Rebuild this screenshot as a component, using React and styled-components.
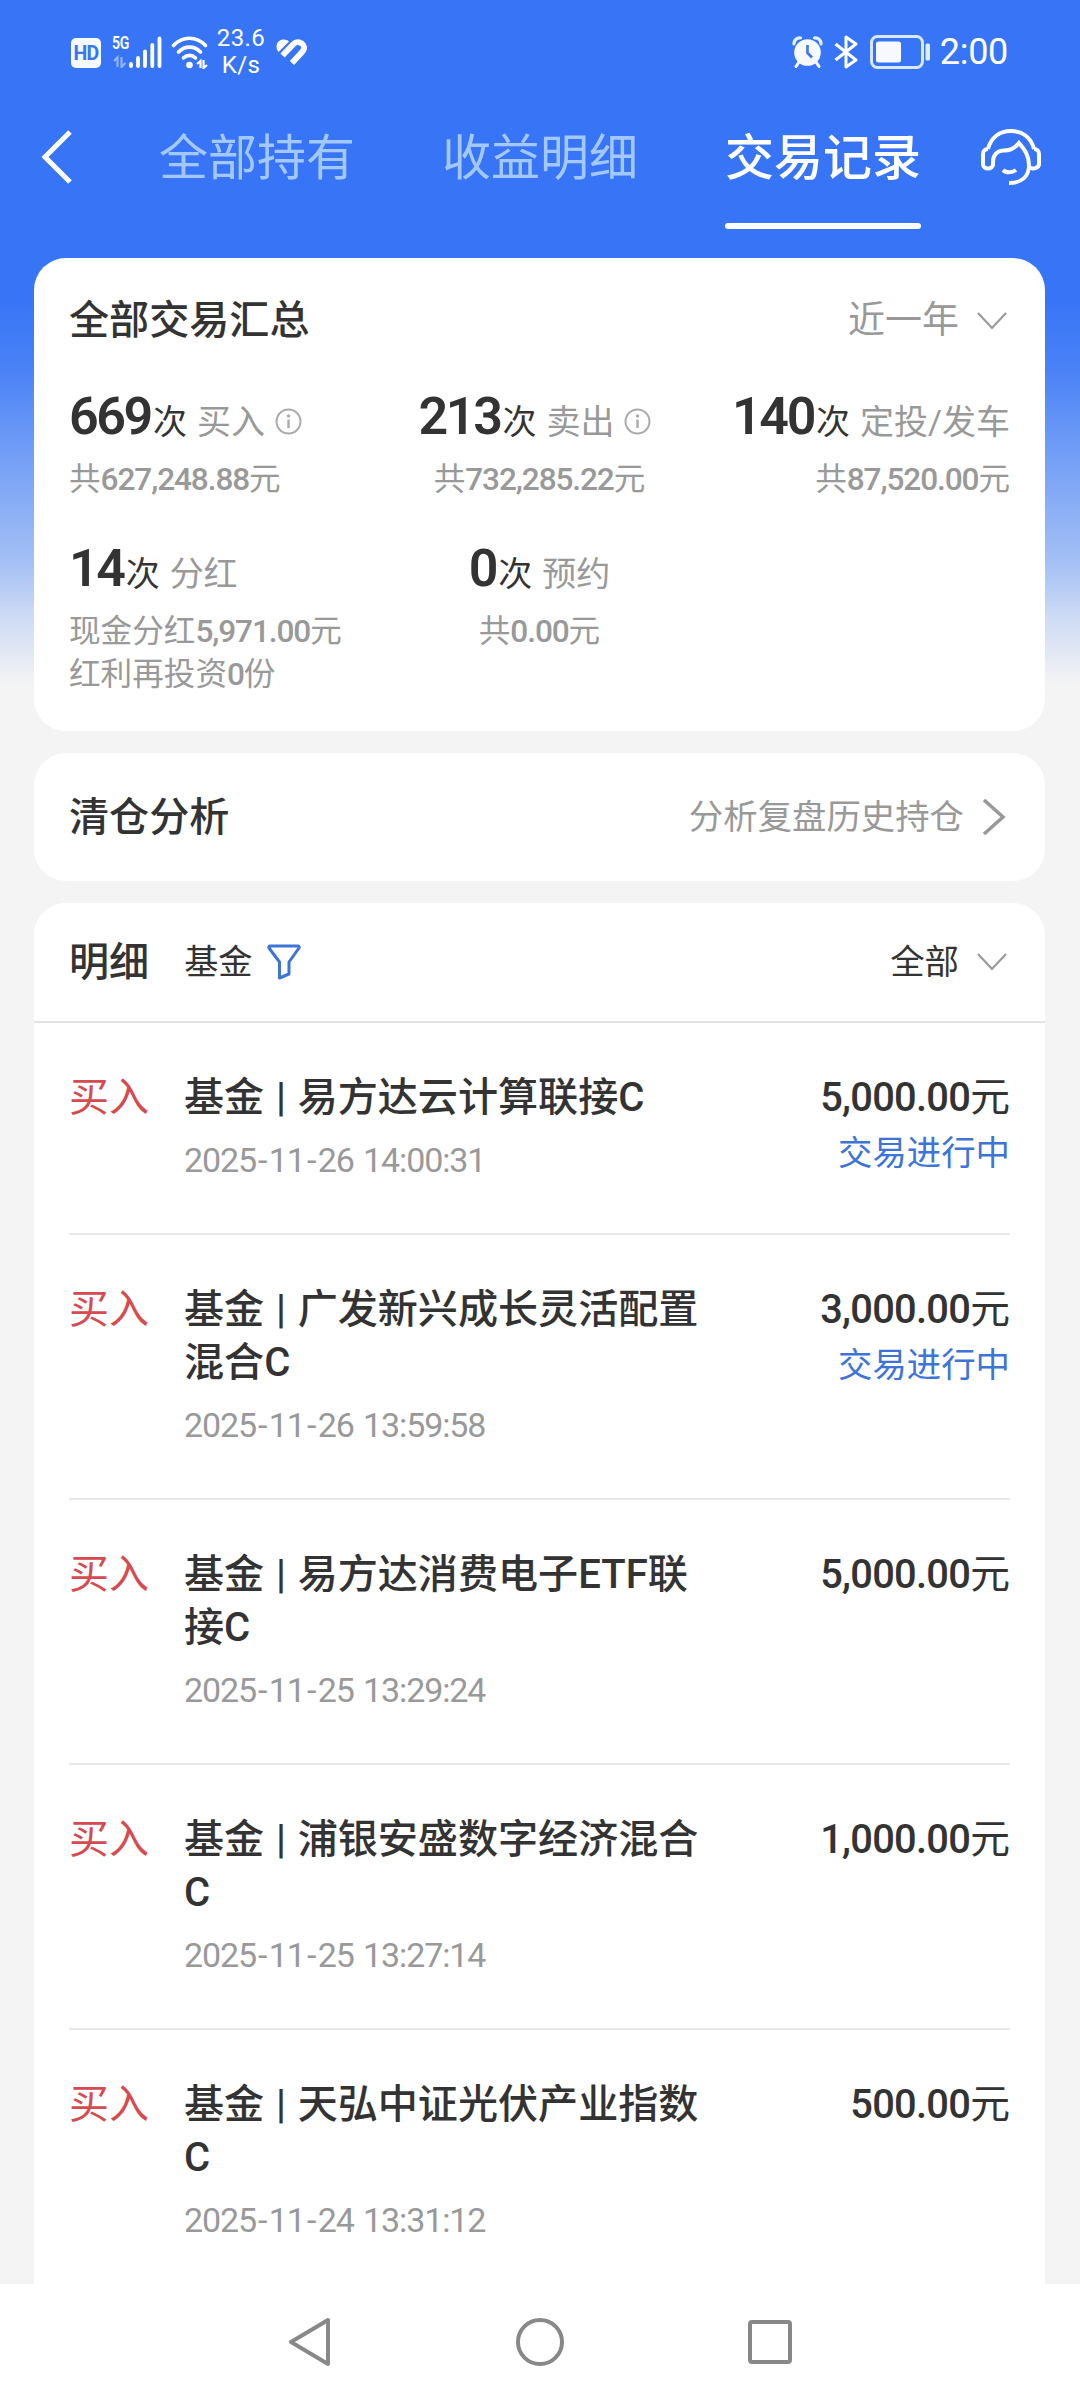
import React from 'react';
import styled, { createGlobalStyle } from 'styled-components';

const GlobalStyle = createGlobalStyle`
  * {
    box-sizing: border-box;
  }

  body {
    margin: 0;
    background: #f4f4f4;
    font-family: Roboto, 'Noto Sans CJK SC', sans-serif;
    color: #333;
  }
`;

const Page = styled.div`
  display: flex;
  flex-direction: column;
  width: 1080px;
  height: 2400px;
  overflow: hidden;
  background: linear-gradient(
      #3875f6 0,
      #3875f6 300px,
      #4a82f6 370px,
      #75a0f6 460px,
      #a3bff5 560px,
      #cfdcf4 620px,
      #f4f4f4 685px
    )
    no-repeat;
`;

const StatusBar = styled.div`
  display: flex;
  justify-content: space-between;
  align-items: center;
  height: 104px;
  padding: 0 72px 0 71px;
  color: #fff;
`;

const StatusGroup = styled.div`
  display: flex;
  align-items: center;
`;

const StatusIcon = styled.svg`
  display: block;
  flex: none;
  margin-left: ${({ $gap }) => $gap || 0}px;
`;

const HdBadge = styled.div`
  width: 30px;
  height: 30px;
  margin-top: 2px;
  border-radius: 5px;
  background: #f4faff;
  color: #3875f6;
  font-size: 19.5px;
  font-weight: 700;
  line-height: 31px;
  letter-spacing: -0.8px;
  text-align: center;
`;

const Signal = styled.div`
  position: relative;
  width: 50px;
  height: 32px;
  margin-left: 11px;
`;

const SignalLabel = styled.span`
  position: absolute;
  top: 0;
  left: 0;
  font-size: 19px;
  font-weight: 600;
  line-height: 14px;
  letter-spacing: -0.5px;
  transform: scaleX(0.74);
  transform-origin: left;
`;

const NetSpeed = styled.div`
  width: 52px;
  margin-left: 6px;
  font-size: 24px;
  line-height: 27px;
  letter-spacing: 0.4px;
  text-align: center;
`;

const Clock = styled.div`
  margin-left: 9px;
  font-size: 36px;
  line-height: 40px;
  letter-spacing: -0.3px;
`;

const NavBar = styled.nav`
  display: flex;
  align-items: center;
  height: 106px;
  padding: 0 39px 0 41px;
`;

const Tabs = styled.div`
  display: flex;
  gap: 87px;
  margin-left: 87px;
  margin-right: 60px;
`;

const Tab = styled.div`
  position: relative;
  width: 196px;
  padding-top: 4px;
  font-size: 49px;
  line-height: 106px;
  white-space: nowrap;
  color: ${({ $active }) => ($active ? '#fff' : '#a3c8ff')};
  font-weight: ${({ $active }) => ($active ? 500 : 400)};

  &::after {
    content: '';
    display: ${({ $active }) => ($active ? 'block' : 'none')};
    position: absolute;
    left: 0;
    top: 121px;
    width: 196px;
    height: 6px;
    border-radius: 3px;
    background: #fff;
  }
`;

const Main = styled.main`
  display: flex;
  flex: 1;
  flex-direction: column;
  gap: 22px;
  min-height: 0;
  padding: 48px 35px 0 34px;
  overflow: hidden;
`;

const Card = styled.section`
  flex: none;
  padding: 0 35px;
  border-radius: 32px;
  background: #fff;
`;

const SummaryCard = styled(Card)`
  height: 473px;
`;

const CardHeader = styled.div`
  display: flex;
  align-items: center;
  justify-content: space-between;
  height: ${({ $height }) => $height}px;
`;

const Title = styled.h2`
  margin: 0;
  padding-top: 2px;
  font-size: 40.1px;
  font-weight: 500;
  line-height: 60px;
`;

const Picker = styled.div`
  display: flex;
  align-items: center;
  padding-top: ${({ $size }) => ($size ? 2 : 0)}px;
  font-size: ${({ $size }) => $size || 34.4}px;
  line-height: 50px;
  color: ${({ $dark }) => ($dark ? '#333' : '#999')};

  svg {
    margin-left: 18px;
    margin-right: 3px;
  }
`;

const StatGrid = styled.div`
  display: grid;
  grid-template-columns: 1fr 1fr 1fr;
  grid-auto-rows: 152px;
`;

const Stat = styled.div`
  display: flex;
  flex-direction: column;
  align-items: ${({ $align }) => $align || 'flex-start'};
`;

const StatHead = styled.div`
  display: flex;
  flex: none;
  align-items: baseline;
  height: 76px;
  padding-top: 2px;
  font-size: 34px;
  line-height: 66px;
  white-space: nowrap;
  color: #999;
`;

const Count = styled.span`
  font-size: 52px;
  font-weight: 600;
  letter-spacing: -2.4px;
  margin-right: 2px;
  color: #333;
`;

const Unit = styled.span`
  margin-right: 10px;
  color: #333;
`;

const InfoIcon = styled.svg`
  align-self: flex-start;
  margin: 24px 9px 0 10px;
`;

const StatNote = styled.div`
  flex: none;
  font-size: 31.6px;
  line-height: 43px;
  white-space: nowrap;
  color: #999;
`;

const Digits = styled.span`
  font-weight: 500;
  letter-spacing: ${({ $tight }) => ($tight ? -1.1 : -0.7)}px;
`;

const DetailCard = styled(Card)`
  padding: 0;
  border-radius: 32px 32px 0 0;
`;

const DetailHeader = styled(CardHeader)`
  padding: 0 35px;
  border-bottom: 2px solid #e4e4e4;
`;

const FilterLabel = styled.div`
  display: flex;
  align-items: center;
  font-size: 34.2px;
  line-height: 48px;

  ${Title} {
    margin-right: 35px;
  }

  svg {
    margin-left: 14px;
  }
`;

const Record = styled.article`
  display: flex;
  margin: 0 35px;
  padding: 48px 0 46px;
  border-bottom: 2px solid #e9e9e9;
`;

const Kind = styled.div`
  width: 115px;
  font-size: 40px;
  line-height: 53px;
  color: #d64a50;
`;

const RecordBody = styled.div`
  width: 530px;
`;

const FundName = styled.div`
  font-size: 40.1px;
  font-weight: 500;
  line-height: 53px;
  word-spacing: 1.8px;
  white-space: pre;
`;

const Time = styled.div`
  margin-top: 11px;
  margin-bottom: 1px;
  font-size: 34px;
  line-height: 51px;
  letter-spacing: -1.1px;
  word-spacing: 2px;
  color: #999;
`;

const Dash = styled.span`
  margin: 0 2.5px 0 2px;
`;

const RecordEnd = styled.div`
  margin-left: auto;
  text-align: right;
  white-space: nowrap;
`;

const Amount = styled.div`
  font-size: 39.8px;
  line-height: 53px;
`;

const State = styled.div`
  margin-top: 4px;
  font-size: 34.4px;
  line-height: 50px;
  color: #3d74d8;
`;

const SystemNav = styled.footer`
  display: flex;
  flex: none;
  align-items: center;
  justify-content: center;
  gap: 184px;
  height: 116px;
  padding-right: 1px;
  background: #fff;
`;

function ChevronDown() {
  return (
    <svg width='30' height='18' viewBox='0 0 30 18' fill='none'>
      <path d='M1 1L15 16L29 1' stroke='#999' strokeWidth='2.2' />
    </svg>
  );
}

function Info() {
  return (
    <InfoIcon width='27' height='27' viewBox='0 0 27 27' fill='none'>
      <circle cx='13.5' cy='13.5' r='12' stroke='#aaa' strokeWidth='2' />
      <path d='M13.5 11.5V20' stroke='#aaa' strokeWidth='2.4' />
      <circle cx='13.5' cy='8' r='1.7' fill='#aaa' />
    </InfoIcon>
  );
}

// numbers are set heavier than the characters around them
function MoneyText({ children, tight }) {
  return children
    .split(/([\d.,]+)/)
    .filter(Boolean)
    .map((part) =>
      /\d/.test(part) ? (
        <Digits key={part} $tight={tight}>
          {part}
        </Digits>
      ) : (
        part
      )
    );
}

function DateText({ children }) {
  return children.split('-').map((part, i) => (
    <React.Fragment key={i}>
      {i > 0 && <Dash>-</Dash>}
      {part}
    </React.Fragment>
  ));
}

function SystemStatus() {
  return (
    <StatusBar>
      <StatusGroup>
        <HdBadge>HD</HdBadge>
        <Signal>
          <SignalLabel>5G</SignalLabel>
          <svg width='50' height='32' viewBox='0 0 50 32'>
            <g stroke='#fff' strokeWidth='3.8' strokeLinecap='round'>
              <path d='M19 28V30M26 22V30M33 15.500V30M40.300 9V30M47.500 2.500V30' />
            </g>
            <g stroke='#8fb4ff' strokeWidth='2.200' fill='none'>
              <path d='M2 25L5.500 21.500V31M9.500 21V31L13.500 27' />
            </g>
          </svg>
        </Signal>
        <StatusIcon $gap={9} width='38' height='34' viewBox='0 0 38 34' fill='none'>
          <g stroke='#fff' strokeWidth='3.600' strokeLinecap='round'>
            <path d='M2.500 10.500C11.500 0.800 25.500 0.800 34.500 10.500' />
            <path d='M7.500 17C14 10.500 23 10.500 29.500 17' />
            <path d='M12.500 23C16 19.500 21 19.500 24.500 23' />
          </g>
          <circle cx='18.500' cy='30' r='3.300' fill='#fff' />
          <path d='M26 29L29.500 26V33M32.500 25V33L36 30' stroke='#fff' strokeWidth='2.200' />
        </StatusIcon>
        <NetSpeed>
          23.6
          <br />
          K/s
        </NetSpeed>
        <StatusIcon $gap={9} width='31' height='28' viewBox='0 0 31 28' fill='none'>
          <path d='M2.500 14C-1.500 9 1 2 7 1.500C9.500 1.300 11.500 2 13 3.500Z' fill='#fff' />
          <path
            d='M6.500 17.500L17 6.500C22 0.500 32 7 26.500 13.500L16 25'
            stroke='#fff'
            strokeWidth='5.800'
          />
        </StatusIcon>
      </StatusGroup>
      <StatusGroup>
        <StatusIcon width='31' height='32' viewBox='0 0 31 32' fill='none'>
          <path
            d='M2 8C2 4 5 1.500 8.500 2M29 8C29 4 26 1.500 22.500 2'
            stroke='#e4f2ff'
            strokeWidth='3.200'
            strokeLinecap='round'
          />
          <circle cx='15.500' cy='16.500' r='14.500' fill='#3875f6' />
          <path d='M7 26L4 30.500M24 26L27 30.500' stroke='#fff' strokeWidth='3' strokeLinecap='round' />
          <circle cx='15.500' cy='16.500' r='13.300' fill='#f6faff' />
          <path d='M15.500 9V17L20 21.500' stroke='#3875f6' strokeWidth='2.600' />
        </StatusIcon>
        <StatusIcon $gap={11} width='24' height='34' viewBox='0 0 24 34' fill='none'>
          <path d='M1.500 9L22 25L12 32V2L22 9L1.500 25' stroke='#fff' strokeWidth='3' strokeLinejoin='round' />
        </StatusIcon>
        <StatusIcon $gap={12} width='61' height='34' viewBox='0 0 61 34' fill='none'>
          <rect x='1.500' y='1.500' width='51' height='31' rx='6' stroke='#d8e8ff' strokeWidth='3' />
          <rect x='6' y='6.500' width='25' height='21' rx='2.500' fill='#f8f8ff' />
          <rect x='55.500' y='8.500' width='4.500' height='17' rx='1.500' fill='#e0ecff' />
        </StatusIcon>
        <Clock>2:00</Clock>
      </StatusGroup>
    </StatusBar>
  );
}

const records = [
  { name: ['基金 | 易方达云计算联接C'], time: '2025-11-26 14:00:31', amount: '5,000.00元', state: '交易进行中' },
  { name: ['基金 | 广发新兴成长灵活配置', '混合C'], time: '2025-11-26 13:59:58', amount: '3,000.00元', state: '交易进行中' },
  { name: ['基金 | 易方达消费电子ETF联', '接C'], time: '2025-11-25 13:29:24', amount: '5,000.00元' },
  { name: ['基金 | 浦银安盛数字经济混合', 'C'], time: '2025-11-25 13:27:14', amount: '1,000.00元' },
  { name: ['基金 | 天弘中证光伏产业指数', 'C'], time: '2025-11-24 13:31:12', amount: '500.00元' },
];

const stats = [
  { count: 669, label: '买入', info: true, notes: ['共627,248.88元'] },
  { count: 213, label: '卖出', info: true, notes: ['共732,285.22元'], align: 'center' },
  { count: 140, label: '定投/发车', notes: ['共87,520.00元'], align: 'flex-end' },
  { count: 14, label: '分红', notes: ['现金分红5,971.00元', '红利再投资0份'] },
  { count: 0, label: '预约', notes: ['共0.00元'], align: 'center' },
];

function App() {
  return (
    <Page>
      <GlobalStyle />
      <SystemStatus />
      <NavBar>
        <svg width='31' height='54' viewBox='0 0 31 54' fill='none'>
          <path d='M29 2L4 27L29 52' stroke='#fff' strokeWidth='5' />
        </svg>
        <Tabs>
          <Tab>全部持有</Tab>
          <Tab>收益明细</Tab>
          <Tab $active>交易记录</Tab>
        </Tabs>
        <svg width='60' height='58' viewBox='0 0 60 58' fill='none' stroke='#fff' strokeWidth='4'>
          <path d='M7 21C10 9 19 3 30 3S50 9 53 21' />
          <path d='M12 38V34C12 27 16 23 22 22.500C29 23 34 20 38 15C42 20 48 26 48 37C48 48 41 55 28 55' />
          <path d='M12 34V36C12 42 2 42 2 36V26C2 23 4 21 7 21M48 39C52 42 58 40 58 36V26C58 23 56 21 53 21' />
          <path d='M22 42C25 45 31 45 35 42' />
        </svg>
      </NavBar>
      <Main>
        <SummaryCard>
          <CardHeader $height={124}>
            <Title>全部交易汇总</Title>
            <Picker $size={37}>
              近一年
              <ChevronDown />
            </Picker>
          </CardHeader>
          <StatGrid>
            {stats.map((stat) => (
              <Stat key={stat.label} $align={stat.align}>
                <StatHead>
                  <Count>{stat.count}</Count>
                  <Unit>次</Unit>
                  {stat.label}
                  {stat.info && <Info />}
                </StatHead>
                {stat.notes.map((note) => (
                  <StatNote key={note}>
                    <MoneyText tight>{note}</MoneyText>
                  </StatNote>
                ))}
              </Stat>
            ))}
          </StatGrid>
        </SummaryCard>
        <Card>
          <CardHeader $height={128}>
            <Title>清仓分析</Title>
            <Picker>
              分析复盘历史持仓
              <svg width='25' height='36' viewBox='0 0 25 36' fill='none'>
                <path d='M2 1L21 18L2 35' stroke='#999' strokeWidth='3.500' />
              </svg>
            </Picker>
          </CardHeader>
        </Card>
        <DetailCard>
          <DetailHeader $height={120}>
            <FilterLabel>
              <Title>明细</Title>
              基金
              <svg width='34' height='36' viewBox='0 0 34 36' fill='none'>
                <path
                  d='M3 2H31C32 2 32.500 3 32 4L22 18V30L12.500 34V18L2 4C1.500 3 2 2 3 2Z'
                  stroke='#3d74d8'
                  strokeWidth='3'
                  strokeLinejoin='round'
                />
              </svg>
            </FilterLabel>
            <Picker $dark>
              全部
              <ChevronDown />
            </Picker>
          </DetailHeader>
          {records.map((record) => (
            <Record key={record.time}>
              <Kind>买入</Kind>
              <RecordBody>
                {record.name.map((line) => (
                  <FundName key={line}>{line}</FundName>
                ))}
                <Time>
                  <DateText>{record.time}</DateText>
                </Time>
              </RecordBody>
              <RecordEnd>
                <Amount>
                  <MoneyText>{record.amount}</MoneyText>
                </Amount>
                {record.state && <State>{record.state}</State>}
              </RecordEnd>
            </Record>
          ))}
        </DetailCard>
      </Main>
      <SystemNav>
        <svg width='44' height='50' viewBox='0 0 44 50' fill='none'>
          <path d='M40 3V47L3 25Z' stroke='#888' strokeWidth='4' strokeLinejoin='round' />
        </svg>
        <svg width='48' height='48' viewBox='0 0 48 48' fill='none'>
          <circle cx='24' cy='24' r='22' stroke='#888' strokeWidth='4' />
        </svg>
        <svg width='44' height='44' viewBox='0 0 44 44' fill='none'>
          <rect x='2' y='2' width='40' height='40' rx='2' stroke='#888' strokeWidth='4' />
        </svg>
      </SystemNav>
    </Page>
  );
}

export default App;
